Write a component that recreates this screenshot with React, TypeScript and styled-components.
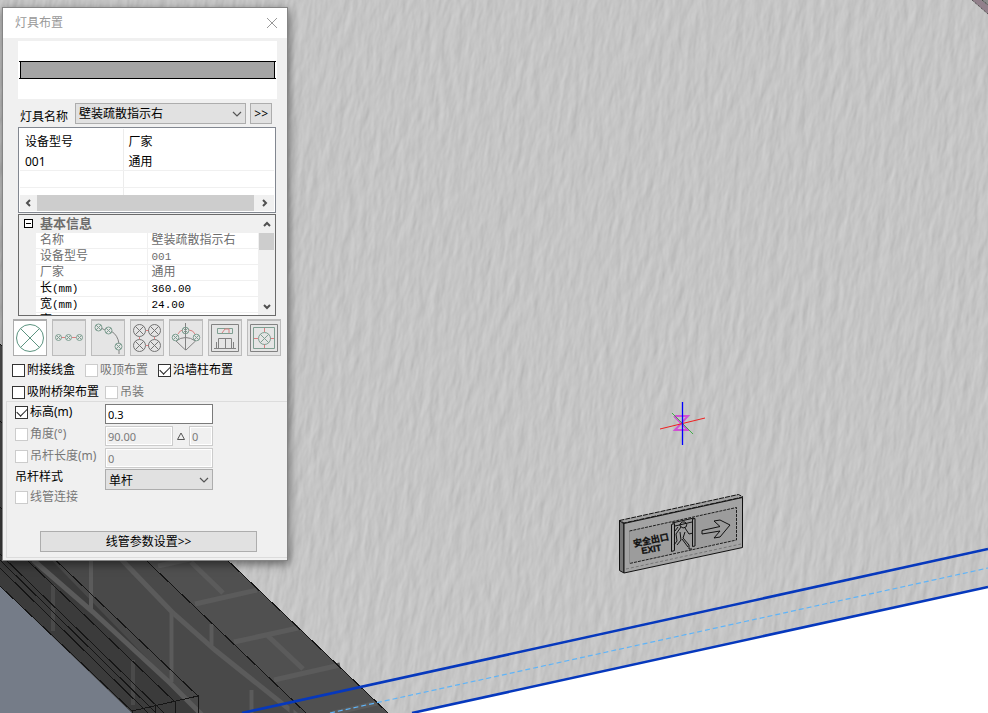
import React from "react";
import styled, { createGlobalStyle, css } from "styled-components";

const GlobalStyle = createGlobalStyle`
  * { box-sizing: border-box; }
  html, body, #root { height: 100%; }
  body {
    margin: 0;
    overflow: hidden;
    font: 12px/16px "Noto Sans", "Noto Sans CJK SC", sans-serif;
    color: #000;
  }
  button, input, select { font: inherit; color: inherit; margin: 0; }
`;

const Workspace = styled.main`
  position: relative;
  width: 100%;
  height: 100%;
  overflow: hidden;
  background: #c4c4c4;
`;

const SceneSvg = styled.svg`
  position: absolute;
  inset: 0;
  width: 100%;
  height: 100%;
`;

const Dialog = styled.section`
  position: absolute;
  left: 2px;
  top: 7px;
  width: 286px;
  background: #f0f0f0;
  border: 1px solid #858585;
  box-shadow: 1px 3px 9px rgba(0, 0, 0, 0.5);
`;

const TitleBar = styled.header`
  display: flex;
  align-items: center;
  justify-content: space-between;
  height: 30px;
  padding: 0 9px 0 12px;
  background: #fff;
  color: #999;
`;

const Title = styled.h1`
  margin: 0;
  font-size: 12px;
  font-weight: 400;
`;

const CloseButton = styled.button`
  display: flex;
  padding: 0;
  border: 0;
  background: none;
`;

const Upper = styled.div`
  display: flex;
  flex-direction: column;
  padding: 3px 10px 0 15px;
`;

const Preview = styled.div`
  display: flex;
  align-items: center;
  height: 58px;
  background: #fff;
  svg { display: block; width: 100%; }
`;

const NameRow = styled.div`
  display: flex;
  align-items: center;
  gap: 4px;
  height: 28px;
  padding: 0 5px 0 2px;
  > label { width: 51px; padding-top: 7px; }
`;

const SelectWrap = styled.div`
  position: relative;
  flex: 1;
  min-width: 0;
  svg {
    position: absolute;
    right: 4px;
    top: 8px;
    pointer-events: none;
  }
`;

const Select = styled.select`
  display: block;
  width: 100%;
  height: 21px;
  padding: 2px 3px 0;
  appearance: none;
  border: 1px solid #adadad;
  border-radius: 0;
  background: #e1e1e1;
`;

const PushButton = styled.button`
  height: 21px;
  padding: 0 3px;
  border: 1px solid #adadad;
  background: #e1e1e1;
  line-height: 19px;
`;

const Frame = styled.div`
  display: flex;
  margin-right: 1px;
  border: 1px solid #6a6a6a;
  background: #fff;
  overflow: hidden;
`;

const ListFrame = styled(Frame)`
  flex-direction: column;
  height: 86px;
  padding: 1px;
  border-color: #828790;
`;

const PropFrame = styled(Frame)`
  height: 102px;
  margin-top: 1px;
`;

const ListTable = styled.table`
  width: 100%;
  flex: 1;
  border-collapse: collapse;
  table-layout: fixed;
  th, td {
    height: 17px;
    padding: 0 5px;
    font-weight: 400;
    text-align: left;
    border-bottom: 1px solid #f0f0f0;
    line-height: 15px;
  }
  th { height: 24px; border-bottom: 0; }
  th:first-child, td:first-child { width: 103px; border-right: 1px solid #ececec; }
  tr:last-child td { height: 8px; border-bottom: 0; }
`;

const HScroll = styled.div`
  display: grid;
  grid-template-columns: 17px 1fr 20px;
  height: 16px;
  background: #f0f0f0;
`;

const Thumb = styled.span`
  background: #cdcdcd;
`;

const ScrollButton = styled.button`
  display: flex;
  align-items: center;
  justify-content: center;
  padding: 0;
  border: 0;
  background: none;
`;

const VScroll = styled.div`
  display: grid;
  grid-template-rows: 18px 17px 1fr 17px;
  width: 17px;
  padding: 0 1px;
  background: #f0f0f0;
`;

const PropTable = styled.table`
  flex: 1;
  border-collapse: collapse;
  table-layout: fixed;
  height: 112px;
  color: #6d6d6d;
  font-family: "Liberation Mono", "Noto Sans CJK SC", monospace;
  td, th {
    height: 16px;
    padding: 2px 4px 0;
    border-bottom: 1px solid #f0f0f0;
    font-weight: 400;
    text-align: left;
    line-height: 13px;
    white-space: nowrap;
  }
  td + td { border-left: 1px solid #f0f0f0; }
  tr:first-child th {
    height: 17px;
    background: #f0f0f0;
    font-size: 13px;
    font-weight: 700;
  }
`;

const Gutter = styled.div`
  width: 17px;
  background: #f0f0f0;
  padding: 4px 0 0 5px;
`;

const Expander = styled.button`
  display: flex;
  align-items: center;
  justify-content: center;
  width: 9px;
  height: 9px;
  padding: 0;
  border: 1px solid #000;
  background: #fff;
  &::after { content: ""; width: 5px; height: 1px; background: #000; }
`;

const PropRow = styled.tr<{ $editable?: boolean }>`
  color: ${(p) => (p.$editable ? "#000" : "inherit")};
`;

const Latin = styled.span`
  font-size: 11px;
`;

const Toolbar = styled.div`
  display: flex;
  gap: 5px;
  padding: 3px 0 0 10px;
`;

const ToolButton = styled.button<{ $active?: boolean }>`
  width: 34px;
  height: 37px;
  padding: 0;
  border: 1px solid ${(p) => (p.$active ? "#adadad" : "#bcbcbc")};
  border-top-width: 2px;
  background: ${(p) => (p.$active ? "#fff" : "#e5e5e5")};
  svg { display: block; }
`;

const OptionRow = styled.div<{ $first?: boolean }>`
  display: flex;
  align-items: center;
  gap: ${(p) => (p.$first ? 10 : 6)}px;
  height: ${(p) => (p.$first ? 28 : 16)}px;
  padding-left: 9px;
`;

const CheckLabel = styled.label<{ $disabled?: boolean }>`
  display: flex;
  align-items: center;
  gap: 2px;
  white-space: nowrap;
  color: ${(p) => (p.$disabled ? "#777" : "#000")};
`;

const CheckBox = styled.input`
  appearance: none;
  display: grid;
  place-items: center;
  width: 13px;
  height: 13px;
  flex: none;
  border: 1px solid #333;
  background: #fff;
  &:disabled { border-color: #ccc; }
  &:checked::after {
    content: "";
    width: 9px;
    height: 5px;
    margin-bottom: 3px;
    border: solid #222;
    border-width: 0 0 1px 1px;
    transform: rotate(-45deg);
  }
`;

const Group = styled.fieldset`
  margin: 1px 0 2px 3px;
  padding: 1px 74px 5px 8px;
  border: 1px solid #dcdcdc;
  border-right: 0;
`;

const Field = styled.div<{ $compact?: boolean }>`
  display: grid;
  grid-template-columns: 90px 1fr;
  align-items: center;
  height: ${(p) => (p.$compact ? 20 : 22)}px;
  > label { align-self: start; height: 18px; }
`;

const inputBox = css`
  width: 100%;
  min-width: 0;
  height: 20px;
  padding: 0 2px;
  border: 1px solid #7a7a7a;
  border-radius: 0;
  background: #fff;
  font-size: 11px;
  &:disabled {
    color: #7a7a7a;
    border-color: #ccc;
    background: #f0f0f0;
    box-shadow: inset 0 0 0 1px #fff;
  }
`;

const TextInput = styled.input`
  ${inputBox}
`;

const AngleInputs = styled.div`
  display: grid;
  grid-template-columns: 68px 8px 1fr;
  column-gap: 4px;
  align-items: center;
  svg { overflow: visible; }
  input:last-child { width: 24px; justify-self: end; }
`;

const Footer = styled.div`
  display: flex;
  padding: 26px 0 0 25px;
  margin-right: -44px;
  button { flex: 1; }
`;

const Chevron = () => (
  <svg width="10" height="6" viewBox="0 0 10 6" fill="none" stroke="#555" strokeWidth="1.2">
    <path d="M1 1l4 4 4-4" />
  </svg>
);

const Arrow = ({ d }: { d: string }) => (
  <svg width="8" height="8" viewBox="0 0 8 8" fill="none" stroke="#505050" strokeWidth="2">
    <path d={d} />
  </svg>
);

const GREEN = "#7f9f92";
const RED = "#d88080";
const GREY = "#828282";

const Lamp = ({ x, y, r, c = GREEN }: { x: number; y: number; r: number; c?: string }) => {
  const k = r * 0.7;
  return (
    <path
      stroke={c}
      d={`M${x - r} ${y}a${r} ${r} 0 1 0 ${2 * r} 0a${r} ${r} 0 1 0 ${-2 * r} 0M${x - k} ${y - k}L${x + k} ${y + k}M${x + k} ${y - k}L${x - k} ${y + k}`}
    />
  );
};

const toolIcons: { name: string; art: React.ReactNode }[] = [
  { name: "单个布置", art: <Lamp x={16} y={17} r={13.5} c="#5c9480" /> },
  {
    name: "直线布置",
    art: (
      <>
        <path stroke={RED} d="M8 16.500h4M19 16.500h4" />
        <Lamp x={5.5} y={16.5} r={3} />
        <Lamp x={15.5} y={16.5} r={3} />
        <Lamp x={26.5} y={16.5} r={3} />
      </>
    ),
  },
  {
    name: "弧线布置",
    art: (
      <>
        <path stroke={GREY} d="M9 7l4 2M19 10q7 4 8 13M27 29v4" />
        <Lamp x={6.5} y={6.5} r={3.5} />
        <Lamp x={16.5} y={9.5} r={3.5} />
        <Lamp x={26.5} y={25.5} r={3.5} />
      </>
    ),
  },
  {
    name: "矩形布置",
    art: (
      <>
        <path stroke={RED} d="M15 9.500h3M15 24.500h3M8.500 16v2M23.500 16v2" />
        <Lamp x={8.5} y={9.5} r={6} c="#747474" />
        <Lamp x={23.5} y={9.5} r={6} c="#747474" />
        <Lamp x={8.5} y={24.5} r={6} c="#747474" />
        <Lamp x={23.5} y={24.5} r={6} c="#747474" />
      </>
    ),
  },
  {
    name: "扇形布置",
    art: (
      <>
        <path stroke={RED} d="M8 13q2-4 5-4M19 9q4 0 6 4" />
        <path stroke={GREY} d="M15.500 2v27L6 20q9.500-7 19.500 0l-9.500 9" />
        <Lamp x={15.5} y={9.5} r={3.3} />
        <Lamp x={5.5} y={16.5} r={3.3} />
        <Lamp x={26.5} y={16.5} r={3.3} />
      </>
    ),
  },
  {
    name: "门上布置",
    art: (
      <>
        <path stroke={GREY} d="M2.500 3.500h27v27h-27zM5 27.500h22M7.500 27v-6M24.500 27v-6M9.500 27v-9.500h13V27M16.500 17v10" />
        <path stroke={GREEN} d="M8.500 7.500h15v5h-15z" />
        <path stroke={RED} d="M13 12l3-4h4v4" />
      </>
    ),
  },
  {
    name: "居中布置",
    art: (
      <>
        <path stroke={GREY} d="M2.500 3.500h27v27h-27z" />
        <path stroke={GREEN} d="M5.500 6.500h21v21h-21z" />
        <path stroke={RED} d="M16.500 7v4M16.500 23v4M6 17.500h4M22 17.500h4" />
        <Lamp x={16.5} y={17.5} r={6} />
      </>
    ),
  },
];

const properties = [
  { label: "名称", value: "壁装疏散指示右" },
  { label: "设备型号", value: "001" },
  { label: "厂家", value: "通用" },
  { label: "长", unit: "(mm)", value: "360.00", editable: true },
  { label: "宽", unit: "(mm)", value: "24.00", editable: true },
  { label: "高", unit: "(mm)", value: "150.00", editable: true },
];

function Scene() {
  return (
    <SceneSvg viewBox="0 0 988 713" preserveAspectRatio="xMinYMin slice" aria-hidden="true">
      <defs>
        <filter id="plaster" x="0" y="0" width="100%" height="100%" colorInterpolationFilters="sRGB">
          <feTurbulence type="fractalNoise" baseFrequency="0.12 0.035" numOctaves="3" seed="8" />
          <feDiffuseLighting surfaceScale="0.4" diffuseConstant="1" lightingColor="#dddddd">
            <feDistantLight azimuth="200" elevation="63" />
          </feDiffuseLighting>
        </filter>
        <clipPath id="wall">
          <path d="M0 0H988V587L412 713H388L0 344z" />
        </clipPath>
      </defs>
      <path d="M0 0H988V713H0z" fill="#fff" />
      <g clipPath="url(#wall)">
        <g transform="rotate(8 494 356)">
          <rect x="-100" y="-120" width="1200" height="980" filter="url(#plaster)" />
        </g>
      </g>

      <path d="M0 586L134 713H0z" fill="#757c88" />
      <path d="M0 507L216 713H132L0 586z" fill="#3b3b3b" />
      <path d="M0 421L306 713H200L0 507z" fill="#494949" />
      <path d="M0 344L388 713H306L0 421z" fill="#505050" />
      <g fill="none" stroke="#5b5b5b" strokeWidth="5">
        <path d="M120 558L172 612L215 650L299 717M33 560L93 612L170 683L202 715" />
        <path d="M158 566l32-7M195 604l62-14M234 642l64-14M274 680l66-15M330 714l47-11M191 562l32 31M268 636l35 33" />
        <path strokeWidth="4" d="M91 561v49M171.500 612v70M251.500 690v23M211.500 624v21" />
        <path strokeWidth="4" stroke="#4a4a4a" d="M53 585v46M133 660v45M291.500 703v10" />
      </g>
      <g fill="none" stroke="#151515" shapeRendering="crispEdges">
        <path d="M0 344L388 713M0 421L306 713M0 507L198 696M0 586L132 711" />
        <path d="M0 554L164 713M0 560L156 713M0 568L148 713M28 561L175 702" />
        <path d="M132 711L198 696V713M175 702v11M155 706v7M132 711v2" />
      </g>

      <path d="M972 0H988V14z" fill="#92808b" />
      <path d="M981 0H988V6z" fill="#8b8b8b" />
      <path d="M972 0L988 14M982 0L988 5" stroke="#333" strokeDasharray="1 1" />

      <g fill="none">
        <path d="M242 713L988 549M412 713L988 587" stroke="#0638bd" strokeWidth="2.6" />
        <path d="M330 713L988 568" stroke="#5fb4f8" strokeWidth="1.2" strokeDasharray="5 3" />
      </g>

      <g fill="none">
        <path d="M674 416H688L675 430H688L674 416" stroke="#d050d4" strokeWidth="2" />
        <path d="M660 429L705 418" stroke="#f02020" />
        <path d="M672 413L693 434" stroke="#3fb048" />
        <path d="M682.500 402V445" stroke="#0000ff" strokeWidth="1.3" />
      </g>

      <g fill="none" stroke="#111" strokeLinejoin="round">
        <path d="M619.500 520.500L738.500 494.500L743 497L624 523z" fill="#a2a2a2" strokeDasharray="5 1" />
        <path d="M619.500 520.500L624 524V573L619.500 570.500z" fill="#777" />
        <path d="M624 523.500L742.500 497.500V547.500L624 573z" fill="#a3a3a3" />
        <path d="M629.500 531V563.500" stroke="#777" />
        <path d="M629.500 531L736.500 507.500V540L629.500 563.500" fill="#9c9c9c" strokeDasharray="3 1" strokeWidth="0.9" />
        <path d="M626 569L741 544" stroke="#777" strokeDasharray="3 2" />
        <path d="M671.500 524.500l3-1v27l-3 1zM692.500 519l2.500-.5v27.500l-2.500.5zM672 523l22-5M675 526l17-4" />
        <path d="M680 524q2-3 5-2q3 2 1 5l-3 1l-3-2zM681 527l-5 7 1 7-3 4M685 528l4 6 4-1M680 532l1 8-4 5M685 532l-2 6 6 7v4h3M682 539l6 8M678 527l-3 4" />
        <path d="M702 530.500L720 526.500L714 521L720 520L730 525L720 537L714 538L720 531L702 534z" />
      </g>
      <g fill="#111" stroke="#111" strokeWidth="0.3" fontWeight="700">
        <text transform="translate(634 547) rotate(-12)" fontSize="9" fontFamily="Noto Sans CJK SC, sans-serif">安全出口</text>
        <text transform="translate(642 554) rotate(-10)" fontSize="9" fontFamily="Liberation Sans, sans-serif">EXIT</text>
      </g>
    </SceneSvg>
  );
}

interface CheckProps {
  text: string;
  checked?: boolean;
  disabled?: boolean;
}

const Check = ({ text, checked, disabled }: CheckProps) => (
  <CheckLabel $disabled={disabled}>
    <CheckBox type="checkbox" defaultChecked={checked} disabled={disabled} />
    {text}
  </CheckLabel>
);

export default function App() {
  const [tool, setTool] = React.useState(0);
  return (
    <>
      <GlobalStyle />
      <Workspace>
        <Scene />
        <Dialog role="dialog" aria-labelledby="dialog-title">
          <TitleBar>
            <Title id="dialog-title">灯具布置</Title>
            <CloseButton aria-label="关闭">
              <svg width="12" height="12" viewBox="0 0 12 12" stroke="#999">
                <path d="M1 1l10 10M11 1L1 11" />
              </svg>
            </CloseButton>
          </TitleBar>
          <Upper>
            <Preview>
              <svg height="20" viewBox="0 0 259 20" preserveAspectRatio="none">
                <path d="M2.500 1.500h254v17h-254z" fill="#a5a5a5" />
                <path d="M1 1.500h257M1 18.500h257M2.500 1v18M256.500 1v18" stroke="#000" />
              </svg>
            </Preview>
            <NameRow>
              <label htmlFor="lamp">灯具名称</label>
              <SelectWrap>
                <Select id="lamp">
                  <option>壁装疏散指示右</option>
                </Select>
                <Chevron />
              </SelectWrap>
              <PushButton>&gt;&gt;</PushButton>
            </NameRow>
            <ListFrame>
              <ListTable>
                <thead>
                  <tr><th>设备型号</th><th>厂家</th></tr>
                </thead>
                <tbody>
                  <tr><td>001</td><td>通用</td></tr>
                  <tr><td /><td /></tr>
                  <tr><td /><td /></tr>
                </tbody>
              </ListTable>
              <HScroll>
                <ScrollButton aria-label="向左"><Arrow d="M5 1L2 4l3 3" /></ScrollButton>
                <Thumb />
                <ScrollButton aria-label="向右"><Arrow d="M3 1l3 3-3 3" /></ScrollButton>
              </HScroll>
            </ListFrame>
            <PropFrame>
              <Gutter><Expander aria-label="折叠" /></Gutter>
              <PropTable>
                <colgroup><col width="111" /><col /></colgroup>
                <tbody>
                  <tr><th colSpan={2}>基本信息</th></tr>
                  {properties.map((p) => (
                    <PropRow key={p.label} $editable={p.editable}>
                      <td>{p.label}{p.unit && <Latin>{p.unit}</Latin>}</td>
                      <td>{/^\d/.test(p.value) ? <Latin>{p.value}</Latin> : p.value}</td>
                    </PropRow>
                  ))}
                </tbody>
              </PropTable>
              <VScroll>
                <ScrollButton aria-label="向上"><Arrow d="M1 6l3-3 3 3" /></ScrollButton>
                <Thumb />
                <span />
                <ScrollButton aria-label="向下"><Arrow d="M1 2l3 3 3-3" /></ScrollButton>
              </VScroll>
            </PropFrame>
          </Upper>
          <Toolbar role="toolbar" aria-label="布置方式">
            {toolIcons.map((t, i) => (
              <ToolButton key={t.name} aria-label={t.name} $active={tool === i} onClick={() => setTool(i)}>
                <svg width="32" height="34" viewBox="0 0 32 34" fill="none">{t.art}</svg>
              </ToolButton>
            ))}
          </Toolbar>
          <OptionRow $first>
            <Check text="附接线盒" />
            <Check text="吸顶布置" disabled />
            <Check text="沿墙柱布置" checked />
          </OptionRow>
          <OptionRow>
            <Check text="吸附桥架布置" />
            <Check text="吊装" disabled />
          </OptionRow>
          <Group>
            <Field>
              <Check text="标高(m)" checked />
              <TextInput aria-label="标高(m)" defaultValue="0.3" />
            </Field>
            <Field>
              <Check text="角度(°)" disabled />
              <AngleInputs>
                <TextInput aria-label="角度(°)" defaultValue="90.00" disabled />
                <svg width="8" height="8" viewBox="0 0 8 8" fill="none" stroke="#555">
                  <path d="M0.500 7.500h7L4 1z" />
                </svg>
                <TextInput aria-label="角度增量" defaultValue="0" disabled />
              </AngleInputs>
            </Field>
            <Field>
              <Check text="吊杆长度(m)" disabled />
              <TextInput aria-label="吊杆长度(m)" defaultValue="0" disabled />
            </Field>
            <Field $compact>
              <label htmlFor="rod">吊杆样式</label>
              <SelectWrap>
                <Select id="rod"><option>单杆</option></Select>
                <Chevron />
              </SelectWrap>
            </Field>
            <Check text="线管连接" disabled />
            <Footer>
              <PushButton>线管参数设置&gt;&gt;</PushButton>
            </Footer>
          </Group>
        </Dialog>
      </Workspace>
    </>
  );
}
